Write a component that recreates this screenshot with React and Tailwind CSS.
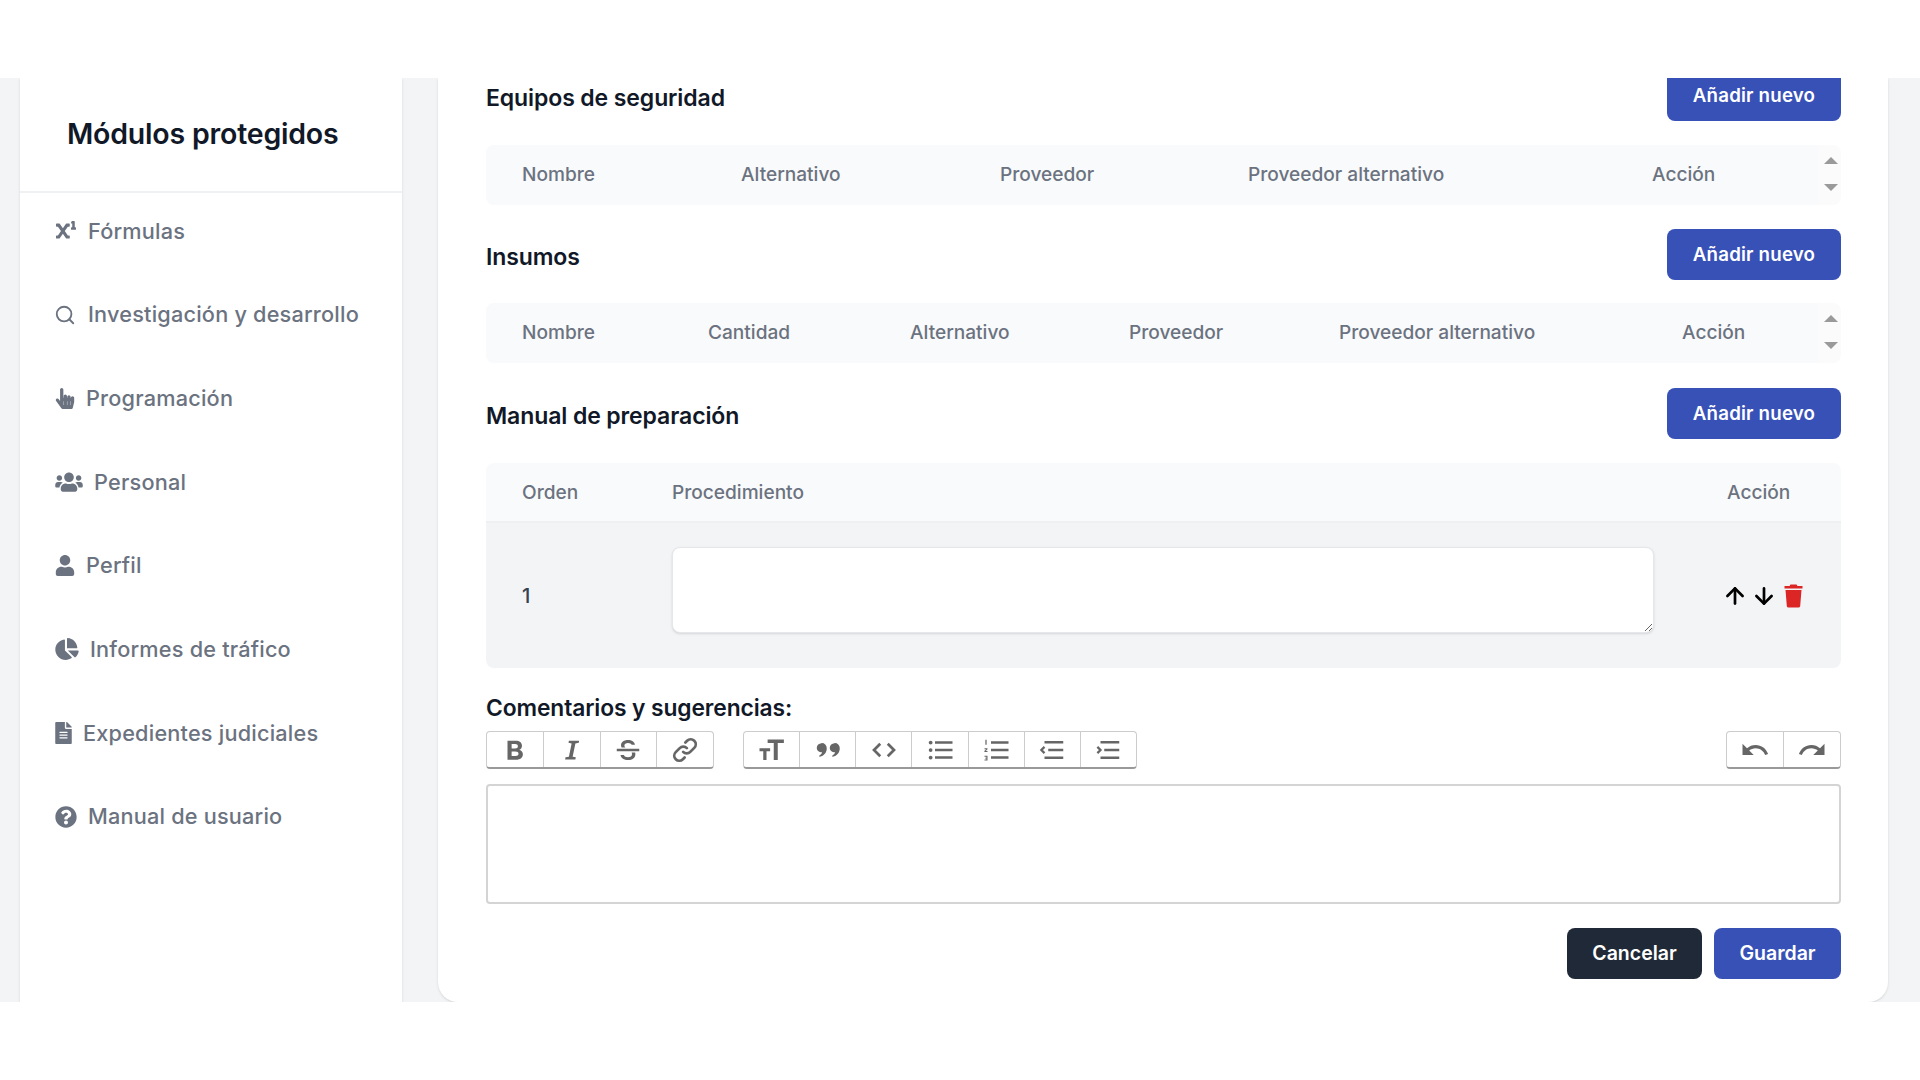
import { ArrowDown, ArrowUp, Search } from 'lucide-react';
import {
  FaChartPie,
  FaFileAlt,
  FaHandPointer,
  FaQuestionCircle,
  FaSuperscript,
  FaUser,
  FaUsers,
} from 'react-icons/fa';

const FONT = 'font-["Inter","Liberation_Sans",sans-serif]';

const MENU = [
  { label: 'Fórmulas', Icon: FaSuperscript, icon: 'w-[22px] h-[20px]' },
  { label: 'Investigación y desarrollo', Icon: Search, icon: 'w-[22px] h-[24px] -ml-[1px] mr-[1px]' },
  { label: 'Programación', Icon: FaHandPointer, icon: 'w-[20px] h-[21px]' },
  { label: 'Personal', Icon: FaUsers, icon: 'w-[28px] h-[22px]' },
  { label: 'Perfil', Icon: FaUser, icon: 'w-[20px] h-[21px]' },
  { label: 'Informes de tráfico', Icon: FaChartPie, icon: 'w-[24px] h-[22px]' },
  { label: 'Expedientes judiciales', Icon: FaFileAlt, icon: 'w-[17px] h-[22px]' },
  { label: 'Manual de usuario', Icon: FaQuestionCircle, icon: 'w-[22px] h-[22px]' },
];

const EQUIPOS = ['Nombre', 'Alternativo', 'Proveedor', 'Proveedor alternativo', 'Acción'];
const INSUMOS = ['Nombre', 'Cantidad', 'Alternativo', 'Proveedor', 'Proveedor alternativo', 'Acción'];

function Glyph({ children }) {
  return (
    <svg viewBox="0 0 24 24" className="w-[30px] h-[30px] text-[#666]" fill="currentColor">
      {children}
    </svg>
  );
}

const TOOLS_TEXT = [
  <Glyph key="bold">
    <path fillRule="evenodd" d="M6 4.500h6.600c3 0 5 1.500 5 4 0 1.500-.8 2.700-2.100 3.200 1.700.5 2.800 1.900 2.800 3.700 0 2.700-2.100 4.400-5.400 4.400H6zM9.300 7.200v3.500h2.800c1.400 0 2.200-.7 2.200-1.800s-.8-1.700-2.200-1.700zm0 6v3.600h3.100c1.500 0 2.400-.7 2.400-1.800s-.9-1.800-2.400-1.800z" />
  </Glyph>,
  <Glyph key="italic">
    <path d="M9.500 4.500h8.200l-.3 1.700-2.700.5-2.200 10.600 2.500.5-.3 1.700H6.500l.3-1.700 2.700-.5 2.200-10.600-2.500-.5z" />
  </Glyph>,
  <Glyph key="strike">
    <path d="M3 11h18v2H3z" />
    <path d="M12 4c3 0 5.200 1.400 5.600 3.800h-2.700C14.500 6.900 13.500 6.300 12 6.300c-1.700 0-2.900.8-2.900 2 0 .7.300 1.200.9 1.700H6.900c-.3-.5-.5-1.100-.5-1.800C6.400 5.700 8.700 4 12 4zM14.900 14h2.800c.1.400.2.800.2 1.300 0 2.900-2.400 4.700-5.900 4.700-3.200 0-5.500-1.500-6-4.100h2.700c.4 1.100 1.600 1.800 3.300 1.800 1.900 0 3.200-.9 3.200-2.200 0-.6-.1-1.100-.3-1.500z" />
  </Glyph>,
  <Glyph key="link">
    <path fill="none" stroke="currentColor" strokeWidth="2.200" strokeLinecap="round" d="M10.500 13.500a4 4 0 0 0 5.700 0l3.200-3.200a4 4 0 0 0-5.700-5.700l-1.400 1.400M13.500 10.500a4 4 0 0 0-5.700 0l-3.200 3.200a4 4 0 0 0 5.700 5.700l1.400-1.400" />
  </Glyph>,
];

const TOOLS_BLOCK = [
  <Glyph key="heading">
    <path d="M8.500 3.500h13v2.800h-4.900V20h-3.200V6.300H8.500zM2 10.500h8.500V13H7.600v7H5v-7H2z" />
  </Glyph>,
  <Glyph key="quote">
    <path d="M6.800 6.500a4 4 0 0 1 4.200 4.200c0 3.200-2.200 5.900-5.500 6.600-.6.100-.8-.6-.3-.9 1.100-.8 1.800-1.700 2.100-2.700a3.600 3.600 0 0 1-4.300-3.400 3.900 3.900 0 0 1 3.800-3.800zM17.200 6.500a4 4 0 0 1 4.200 4.200c0 3.200-2.200 5.900-5.500 6.600-.6.100-.8-.6-.3-.9 1.100-.8 1.800-1.700 2.100-2.700a3.600 3.600 0 0 1-4.300-3.400 3.900 3.900 0 0 1 3.800-3.800z" />
  </Glyph>,
  <Glyph key="code">
    <path fill="none" stroke="currentColor" strokeWidth="2.200" d="M9 7l-5 5 5 5M15 7l5 5-5 5" />
  </Glyph>,
  <Glyph key="bullets">
    <circle cx="4.500" cy="6" r="1.500" />
    <circle cx="4.500" cy="12" r="1.500" />
    <circle cx="4.500" cy="18" r="1.500" />
    <path d="M8 5h14v2H8zM8 11h14v2H8zM8 17h14v2H8z" />
  </Glyph>,
  <Glyph key="numbers">
    <path d="M3.500 3.800h1v4h-1zM2.800 10.500h2.400v.8l-1.400 1.400h1.400v.8H2.700v-.8l1.400-1.400H2.800zM2.800 16.500h2.400v3.800H2.800v-.8h1.500v-.7H3.300v-.7h1v-.7H2.800z" />
    <path d="M8 5h14v2H8zM8 11h14v2H8zM8 17h14v2H8z" />
  </Glyph>,
  <Glyph key="outdent">
    <path d="M6 4.800h15v2H6zM9 11h12v2H9zM6 17.200h15v2H6z" />
    <path fill="none" stroke="currentColor" strokeWidth="1.800" d="M6 9.500L3.500 12 6 14.500" />
  </Glyph>,
  <Glyph key="indent">
    <path d="M6 4.800h15v2H6zM9 11h12v2H9zM6 17.200h15v2H6z" />
    <path fill="none" stroke="currentColor" strokeWidth="1.800" d="M3.500 9.500L6 12l-2.500 2.500" />
  </Glyph>,
];

const TOOLS_HISTORY = [
  <Glyph key="undo">
    <path d="M12.500 8c-2.650 0-5.050.99-6.900 2.600L2 7v9h9l-3.620-3.620c1.390-1.160 3.160-1.880 5.120-1.880 3.540 0 6.550 2.310 7.600 5.500l2.370-.78C21.080 11.030 17.150 8 12.500 8z" />
  </Glyph>,
  <Glyph key="redo">
    <path d="M18.400 10.600C16.550 8.990 14.150 8 11.500 8c-4.650 0-8.580 3.030-9.960 7.220L3.900 16c1.050-3.190 4.050-5.500 7.600-5.500 1.950 0 3.730.72 5.120 1.880L13 16h9V7l-3.600 3.600z" />
  </Glyph>,
];

function AddButton() {
  return (
    <button className="w-[174px] h-[51px] pt-[1px] rounded-lg bg-[#3851b7] text-white text-[18.700px] font-semibold tracking-[0.2px]">
      Añadir nuevo
    </button>
  );
}

function SectionHead({ title, first }) {
  return (
    <div className={`flex items-center justify-between ${first ? '-mt-[8px]' : ''}`}>
      <h2 className={`text-[23px] font-semibold text-[#111827] tracking-[-0.1px] ${first ? 'mt-[5px]' : 'mt-[5px]'}`}>
        {title}
      </h2>
      <AddButton />
    </div>
  );
}

function ScrollHeader({ columns, grid }) {
  return (
    <div className="flex h-[60px] bg-[#fbfbfc] rounded-lg">
      <div className={`flex-1 grid items-center pl-[36px] pb-[2px] bg-[#f9fafb] rounded-l-lg text-[19.100px] font-medium text-[#6b7280] ${grid}`}>
        {columns.map((col) => (
          <span key={col}>{col}</span>
        ))}
      </div>
      <div className="w-[22px] flex flex-col items-center justify-center gap-[20px] pl-[2px] pb-[2px]">
        <svg viewBox="0 0 14 7" className="w-[14px] h-[7px] text-[#9a9a9a]" fill="currentColor">
          <path d="M7 0l7 7H0z" />
        </svg>
        <svg viewBox="0 0 14 7" className="w-[14px] h-[7px] text-[#9a9a9a]" fill="currentColor">
          <path d="M0 0h14L7 7z" />
        </svg>
      </div>
    </div>
  );
}

function ToolGroup({ tools, width }) {
  return (
    <div className={`flex h-[38px] bg-white border border-[#ccc] border-b-2 border-b-[#999] rounded-[4px] ${width}`}>
      {tools.map((tool, i) => (
        <div key={i} className={`flex-1 flex items-center justify-center ${i > 0 ? 'border-l border-[#ccc]' : ''}`}>
          {tool}
        </div>
      ))}
    </div>
  );
}

export default function App() {
  return (
    <div className={`h-screen bg-white pt-[78px] ${FONT}`}>
      <div className="h-[924px] flex bg-[#f3f4f6] overflow-hidden">
        <aside className="ml-[20px] w-[382px] bg-white shadow-sm">
          <div className="h-[115px] flex items-center pl-[47px] border-b-2 border-[#f0f1f3]">
            <h1 className="text-[28.500px] font-semibold text-[#111827] tracking-[-0.2px]">Módulos protegidos</h1>
          </div>
          <nav className="pl-[35px] -mt-[4px] flex flex-col">
            {MENU.map(({ label, Icon, icon }) => (
              <div key={label} className="h-[83.700px] flex items-center gap-[11px] text-[#6b7280]">
                <Icon className={icon} />
                <span className="text-[21.700px] font-medium tracking-[0.2px]">{label}</span>
              </div>
            ))}
          </nav>
        </aside>

        <main className="ml-[36px] w-[1450px] bg-white rounded-b-[20px] shadow-sm pl-[48px] pr-[47px]">
          <SectionHead title="Equipos de seguridad" first />
          <div className="mt-[24px]">
            <ScrollHeader columns={EQUIPOS} grid="grid-cols-[219px_259px_248px_404px_1fr]" />
          </div>

          <div className="mt-[24px]">
            <SectionHead title="Insumos" />
          </div>
          <div className="mt-[23px]">
            <ScrollHeader columns={INSUMOS} grid="grid-cols-[186px_202px_219px_210px_343px_1fr]" />
          </div>

          <div className="mt-[25px]">
            <SectionHead title="Manual de preparación" />
          </div>

          <div className="mt-[24px] rounded-lg overflow-hidden">
            <div className="h-[60px] grid grid-cols-[150px_1055px_1fr] items-center pl-[36px] bg-[#f9fafb] border-b-2 border-[#eef0f2] text-[19.100px] font-medium text-[#6b7280]">
              <span>Orden</span>
              <span>Procedimiento</span>
              <span>Acción</span>
            </div>
            <div className="h-[145px] grid grid-cols-[150px_1050px_1fr] items-center pl-[36px] bg-[#f3f4f6]">
              <span className="text-[20px] text-[#374151] font-medium">1</span>
              <textarea className="w-[982px] h-[86px] -mt-[12px] bg-white border border-[#e5e7eb] rounded-lg shadow-sm" />
              <div className="flex items-center gap-[3px]">
                <ArrowUp className="w-[26px] h-[26px] text-black" strokeWidth={2.500} />
                <ArrowDown className="w-[26px] h-[26px] text-black" strokeWidth={2.500} />
                <svg viewBox="0 0 20 24" className="w-[21px] h-[24px] ml-[3px] text-[#dc2626]" fill="currentColor">
                  <path d="M7 .5h6l1 1.500h5v2.500H1V2h5zM2 6h16l-1.300 16a1.800 1.800 0 0 1-1.800 1.600H5.100a1.800 1.800 0 0 1-1.800-1.600z" />
                </svg>
              </div>
            </div>
          </div>

          <p className="mt-[26px] h-[28px] leading-[28px] text-[22.800px] font-semibold text-[#111827] tracking-[-0.1px]">
            Comentarios y sugerencias:
          </p>

          <div className="mt-[9px] flex">
            <ToolGroup tools={TOOLS_TEXT} width="w-[228px]" />
            <div className="ml-[29px]">
              <ToolGroup tools={TOOLS_BLOCK} width="w-[394px]" />
            </div>
            <div className="ml-auto">
              <ToolGroup tools={TOOLS_HISTORY} width="w-[115px]" />
            </div>
          </div>

          <div className="mt-[15px] h-[120px] border-2 border-[#d4d4d4] rounded-[4px]" />

          <div className="mt-[24px] flex justify-end gap-[12px]">
            <button className="w-[135px] h-[51px] rounded-lg bg-[#1f2937] text-white text-[19.500px] font-semibold">
              Cancelar
            </button>
            <button className="w-[127px] h-[51px] rounded-lg bg-[#3851b7] text-white text-[19.500px] font-semibold">
              Guardar
            </button>
          </div>
        </main>
      </div>
    </div>
  );
}
